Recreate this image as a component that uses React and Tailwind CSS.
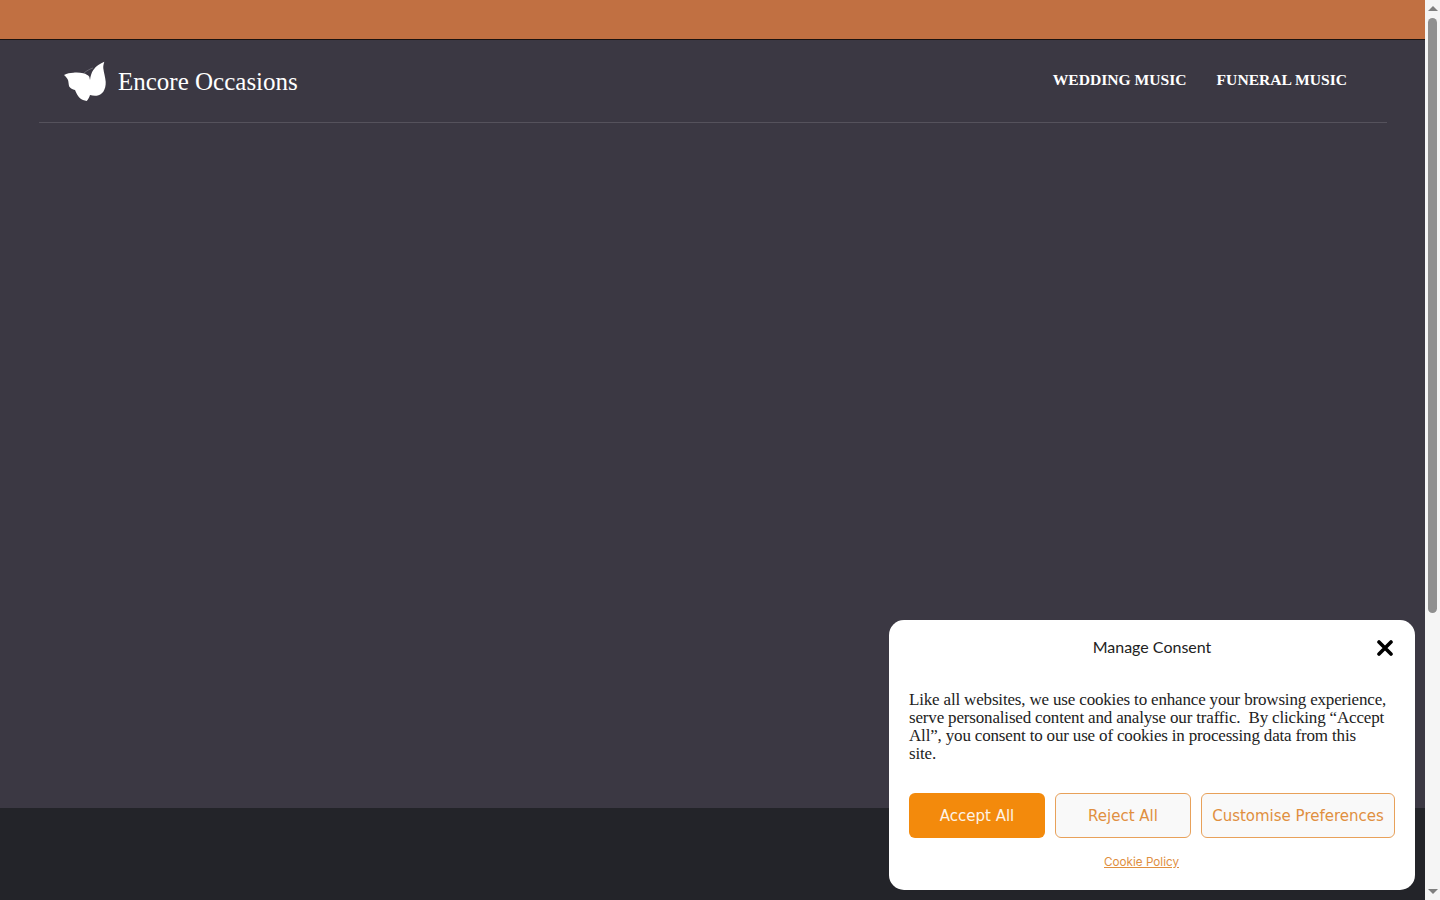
import React from "react";

const serif = "font-['Liberation_Serif','Times_New_Roman',serif]";
const sans = "font-['Lato','Open_Sans',sans-serif]";

const Butterfly = () => (
    <svg width="42" height="41" viewBox="0 0 42 41" className="shrink-0 -mt-px">
        <path
            fill="#ffffff"
            d="M0 14 C3 12.5 6 11.8 9.3 11.7 C13 11.4 16.5 11.6 19.3 12.3 C22 13 24 14.2 25.3 15.7 L26 19 C26.5 15 27.5 11.5 29.3 9 C31 6.8 32.5 5.2 34.3 4 C36.3 2.8 38.3 1.6 40.3 0.7 C39.6 3 39.1 5 39.3 7.3 C39.8 11.5 41.3 16 41.7 20.7 C41.9 24.5 41 28 39.3 30.7 C37.5 33 35.2 34.3 32.7 34.7 C30.4 35 28 34.6 26 34 C25.3 36.3 24.2 38.5 22.7 40 C20 39.6 17.8 38.7 16 37.3 C13.8 35 12.2 32 11 29 C8.5 28.5 6.5 27.3 5.2 25.5 C4.6 23.5 4.6 21 4 19 C3 17 1.5 15.4 0 14 Z"
        />
        <path d="M20 12 C23 9.5 26 8 29 7" fill="none" stroke="#85838c" strokeWidth="0.6" />
    </svg>
);

const Scrollbar = () => (
    <div className="w-[15px] shrink-0 h-full bg-[#f5f5f5] flex flex-col items-center">
        <div className="h-[17px] flex items-center justify-center">
            <div className="w-0 h-0 border-x-[5px] border-x-transparent border-b-[5px] border-b-[#7f7f7f]"></div>
        </div>
        <div className="w-[9px] h-[595px] mt-px rounded-full bg-[#8f8f8f]"></div>
        <div className="flex-1"></div>
        <div className="h-[17px] flex items-center justify-center">
            <div className="w-0 h-0 border-x-[5px] border-x-transparent border-t-[5px] border-t-[#7f7f7f]"></div>
        </div>
    </div>
);

const Header = () => (
    <header className="ml-[39px] mr-[38px] h-[83px] border-b border-[#55525c] flex items-start justify-between pl-[25px] pr-[40px]">
        <div className="flex items-center gap-[12px] mt-[21px]">
            <Butterfly />
            <span className={`${serif} text-white text-[25px] leading-[42px]`}>Encore Occasions</span>
        </div>
        <nav className={`${serif} flex gap-[30px] mt-[28px] text-white text-[15.6px] leading-[24px] font-bold`}>
            <a>WEDDING MUSIC</a>
            <a>FUNERAL MUSIC</a>
        </nav>
    </header>
);

const ConsentBox = () => (
    <div className="absolute right-[25px] bottom-[10px] w-[526px] h-[270px] bg-white rounded-[15px] px-[20px] pt-[16px]">
        <div className="relative h-[22px] flex justify-center">
            <span className={`${sans} text-[16px] leading-[22px] text-[#222222]`}>Manage Consent</span>
            <svg width="16" height="16" viewBox="0 0 16 16" className="absolute right-[2px] top-[4px]">
                <path d="M2 2 L14 14 M14 2 L2 14" stroke="#000000" strokeWidth="3.6" strokeLinecap="round" />
            </svg>
        </div>
        <p className={`${serif} mt-[33px] text-[17px] leading-[18px] tracking-[-0.17px] text-[#222222]`}>
            Like all websites, we use cookies to enhance your browsing experience, serve personalised content and analyse our traffic.&nbsp; By clicking “Accept All”, you consent to our use of cookies in processing data from this<br />site.
        </p>
        <div className="flex gap-[10px] mt-[30px] font-['DejaVu_Sans',sans-serif] text-[15px]">
            <button className="w-[136px] h-[45px] pt-px rounded-[6px] bg-[#f38a0c] text-[#fdf3e6]">Accept All</button>
            <button className="w-[136px] h-[45px] pt-px rounded-[6px] bg-[#f9f9f9] border border-[#e8a15a] text-[#e08f3f]">Reject All</button>
            <button className="w-[194px] h-[45px] pt-px rounded-[6px] bg-[#f9f9f9] border border-[#e8a15a] text-[#e08f3f]">Customise Preferences</button>
        </div>
        <div className="mt-[15px] flex justify-center pr-[21px]">
            <a className="font-['Inter',sans-serif] text-[11.7px] leading-[18px] text-[#e08f3f] underline">Cookie Policy</a>
        </div>
    </div>
);

const App = () => {
    return (
        <div className="relative w-[1440px] h-[900px] overflow-hidden flex">
            <div className="flex-1 flex flex-col">
                <div className="h-[40px] bg-[#c17042] border-b border-[#1a1210]"></div>
                <main className="h-[768px] bg-[#3b3843]">
                    <Header />
                </main>
                <footer className="flex-1 bg-[#232429]"></footer>
            </div>
            <Scrollbar />
            <ConsentBox />
        </div>
    );
};

export default App;
